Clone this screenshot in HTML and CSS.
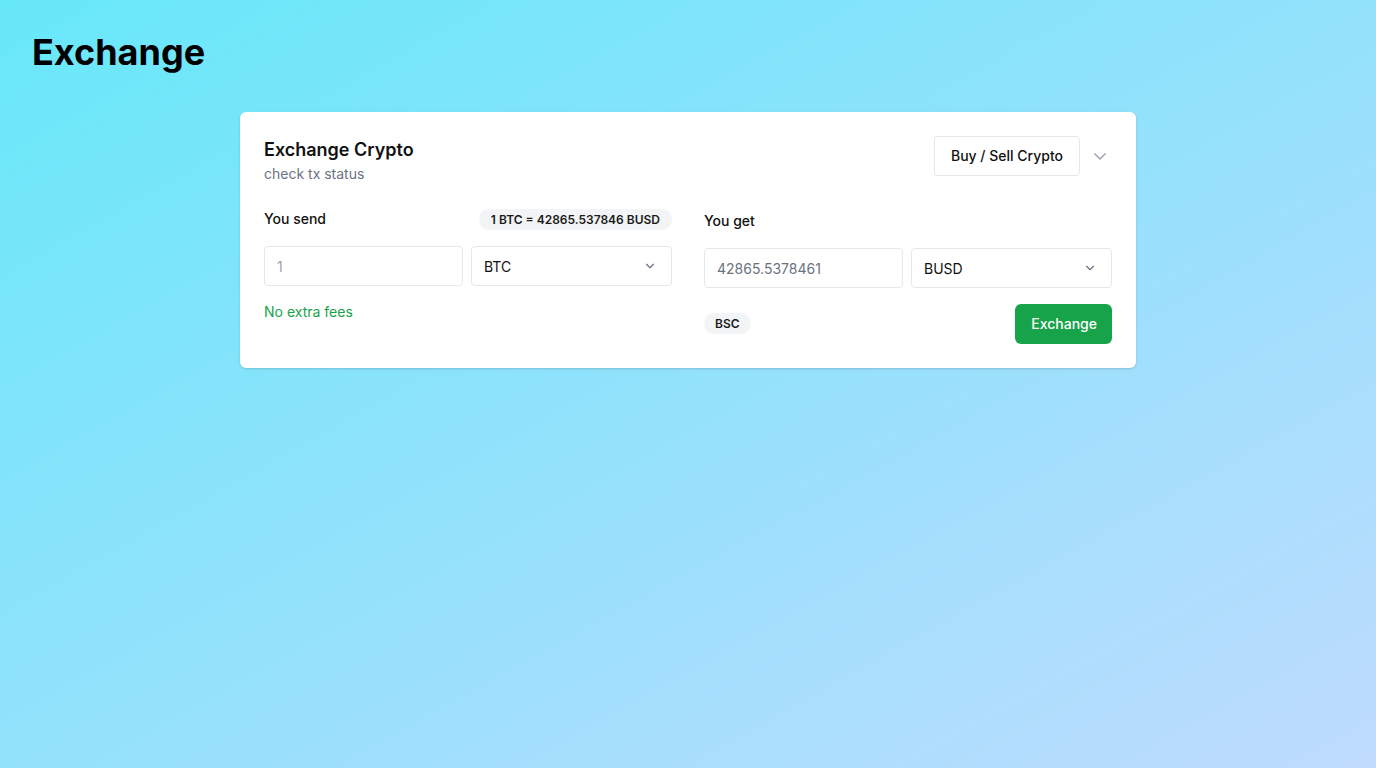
FILE: index.html
```html
<!DOCTYPE html>
<html>
<head>
<meta charset="utf-8">
<link rel="stylesheet" href="styles.css">
</head>
<body>
<div class="page">
  <h1 class="page-title">Exchange</h1>
  <div class="card">
    <div class="card-head">
      <div class="titles">
        <div class="card-title">Exchange Crypto</div>
        <div class="card-sub">check tx status</div>
      </div>
      <div class="head-actions">
        <button class="btn-outline">Buy / Sell Crypto</button>
        <svg class="head-chev" width="18" height="18" viewBox="0 0 24 24" fill="none" stroke="#9ca3af" stroke-width="2" stroke-linecap="round" stroke-linejoin="round"><path d="M5 9l7 7 7-7"/></svg>
      </div>
    </div>
    <div class="cols">
      <div class="col">
        <div class="label-row send">
          <span class="label">You send</span>
          <span class="badge">1 BTC = 42865.537846 BUSD</span>
        </div>
        <div class="fields">
          <div class="input muted-light">1</div>
          <div class="select">BTC<svg width="14" height="14" viewBox="0 0 24 24" fill="none" stroke="#6b7280" stroke-width="2" stroke-linecap="round" stroke-linejoin="round"><path d="M6 9l6 6 6-6"/></svg></div>
        </div>
        <div class="fees">No extra fees</div>
      </div>
      <div class="col">
        <div class="label-row get">
          <span class="label">You get</span>
        </div>
        <div class="fields">
          <div class="input muted">42865.5378461</div>
          <div class="select">BUSD<svg width="14" height="14" viewBox="0 0 24 24" fill="none" stroke="#6b7280" stroke-width="2" stroke-linecap="round" stroke-linejoin="round"><path d="M6 9l6 6 6-6"/></svg></div>
        </div>
        <div class="bottom-row">
          <span class="badge small">BSC</span>
          <button class="btn-green">Exchange</button>
        </div>
      </div>
    </div>
  </div>
</div>
</body>
</html>
```
FILE: styles.css
```css
* { box-sizing: border-box; }
html, body { margin: 0; height: 100%; }
body {
  font-family: Inter, "Noto Sans", sans-serif;
  background: linear-gradient(to bottom right, #67e8f9, #bfdbfe);
  min-height: 768px;
  color: #111827;
}
.page { padding: 32px 32px; }
.page-title {
  margin: 0;
  font-size: 36px;
  line-height: 40px;
  font-weight: 700;
  color: #000;
}
.card {
  width: 896px;
  margin: 40px auto 0;
  background: #fff;
  border-radius: 6px;
  box-shadow: 0 1px 3px rgba(0,0,0,0.1), 0 1px 2px rgba(0,0,0,0.06);
  padding: 24px;
}
.card-head {
  display: flex;
  justify-content: space-between;
  align-items: flex-start;
  height: 48px;
}
.card-title {
  font-size: 18px;
  line-height: 28px;
  font-weight: 600;
  color: #111;
}
.card-sub {
  font-size: 14px;
  line-height: 20px;
  color: #6b7280;
}
.head-actions { display: flex; align-items: center; gap: 11px; }
.btn-outline {
  font-family: inherit;
  height: 40px;
  padding: 0 16px 2px;
  background: #fff;
  border: 1px solid #e5e7eb;
  border-radius: 4px;
  font-size: 14px;
  font-weight: 500;
  color: #111;
}
.head-chev { margin-right: 3px; }
.cols {
  display: grid;
  grid-template-columns: 1fr 1fr;
  gap: 32px;
  margin-top: 24px;
}
.label-row {
  display: flex;
  justify-content: space-between;
  align-items: center;
}
.label-row.send { height: 22px; margin-bottom: 16px; }
.label-row.get { height: 26px; margin-bottom: 14px; }
.label { font-size: 14px; line-height: 20px; font-weight: 500; color: #111; }
.badge {
  display: inline-flex;
  align-items: center;
  height: 21px;
  padding: 0 12px;
  border-radius: 999px;
  background: #f3f4f6;
  font-size: 12px;
  font-weight: 600;
  color: #1a1a1a;
}
.fields { display: flex; gap: 8px; }
.input, .select {
  flex: 1 1 0;
  height: 40px;
  border: 1px solid #e5e7eb;
  border-radius: 4px;
  display: flex;
  align-items: center;
  padding: 0 12px;
  font-size: 14px;
}
.muted-light { color: #9ca3af; }
.muted { color: #6b7280; }
.select { justify-content: space-between; color: #111; padding-right: 14px; }
.fees {
  margin-top: 16px;
  font-size: 14px;
  line-height: 20px;
  color: #16a34a;
}
.bottom-row {
  margin-top: 16px;
  display: flex;
  justify-content: space-between;
  align-items: center;
}
.badge.small { padding: 0 11px; margin-top: -2px; }
.btn-green {
  font-family: inherit;
  height: 40px;
  padding: 0 15px 1px 16px;
  background: #16a34a;
  color: #fff;
  border: none;
  border-radius: 6px;
  font-size: 14px;
  font-weight: 500;
}
```
